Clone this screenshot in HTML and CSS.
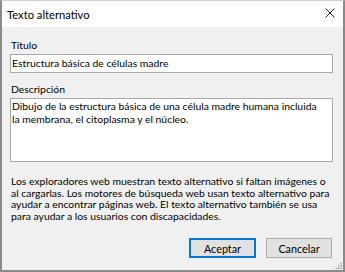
FILE: index.html
```html
<!DOCTYPE html>
<html lang="es">
<head>
    <meta charset="UTF-8">
    <title>Texto alternativo</title>
    <link rel="stylesheet" href="styles.css">
</head>
<body>
    <div class="dialog">
        <div class="title-bar">
            <span class="title-text">Texto alternativo</span>
            <span class="close-btn">
                <svg width="10" height="10" viewBox="0 0 10 10">
                    <path d="M0.5 0.5 L9.5 9.5 M9.5 0.5 L0.5 9.5" stroke="#222" stroke-width="1" fill="none"/>
                </svg>
            </span>
        </div>

        <div class="dialog-body">
            <label class="field-label">Título</label>
            <div class="text-input">Estructura básica de células madre</div>

            <label class="field-label desc-label">Descripción</label>
            <div class="text-area">Dibujo de la estructura básica de una célula madre humana incluida la membrana, el citoplasma y el núcleo.</div>

            <p class="help-text">
                Los exploradores web muestran texto alternativo si faltan imágenes o al cargarlas. Los motores de búsqueda web usan texto alternativo para ayudar a encontrar páginas web. El texto alternativo también se usa para ayudar a los usuarios con discapacidades.
            </p>

            <div class="button-row">
                <button class="btn btn-default">Aceptar</button>
                <button class="btn">Cancelar</button>
            </div>
        </div>
        <div class="grip"></div>
    </div>
</body>
</html>
```

FILE: styles.css
```css
:root {
    --body-bg: #f0f0f0;
    --frame: #8a8a8a;
    --field-border: #a9a9a9;
    --accent: #0078d7;
    --text: #000000;
}

* {
    margin: 0;
    padding: 0;
    box-sizing: border-box;
}

body {
    font-family: Lato, 'Noto Sans', sans-serif;
    font-size: 10.4px;
    color: var(--text);
    background: var(--body-bg);
}

.dialog {
    width: 345px;
    height: 272px;
    background: var(--body-bg);
    border: 2px solid var(--frame);
    border-top: 1px solid #d0d0d0;
    display: flex;
    flex-direction: column;
    position: relative;
}

.title-bar {
    height: 26px;
    background: #ffffff;
    display: flex;
    align-items: center;
    justify-content: space-between;
    padding: 0 8px 0 5px;
}

.title-text {
    font-size: 11.2px;
}

.close-btn {
    display: flex;
    margin-top: -2px;
}

.dialog-body {
    flex: 1;
    padding: 10px 10px 0 8px;
    display: flex;
    flex-direction: column;
}

.field-label {
    display: block;
    line-height: 17px;
    padding-left: 1px;
}

.desc-label {
    margin-top: 8px;
}

.text-input {
    height: 19px;
    background: #ffffff;
    border: 1px solid var(--field-border);
    line-height: 17px;
    padding: 0 1px;
    white-space: nowrap;
}

.text-area {
    height: 64px;
    background: #ffffff;
    border: 1px solid var(--field-border);
    line-height: 12.7px;
    padding: 1px 6px 0 1px;
}

.help-text {
    margin-top: 14px;
    line-height: 11.7px;
    padding: 0 2px 0 1px;
}

.button-row {
    margin-top: auto;
    margin-bottom: 12px;
    display: flex;
    justify-content: flex-end;
    gap: 10px;
    padding-right: 1px;
}

.btn {
    font-family: inherit;
    font-size: 10.8px;
    width: 66px;
    height: 20px;
    background: #e1e1e1;
    border: 1px solid #adadad;
    color: var(--text);
}

.btn-default {
    width: 67px;
    border: 2px solid var(--accent);
}

.grip {
    position: absolute;
    right: 1px;
    bottom: 1px;
    width: 7px;
    height: 7px;
    background:
        radial-gradient(circle, #9a9a9a 0.8px, transparent 1px) 0 0 / 2.5px 2.5px;
    clip-path: polygon(100% 0, 100% 100%, 0 100%);
}
```
